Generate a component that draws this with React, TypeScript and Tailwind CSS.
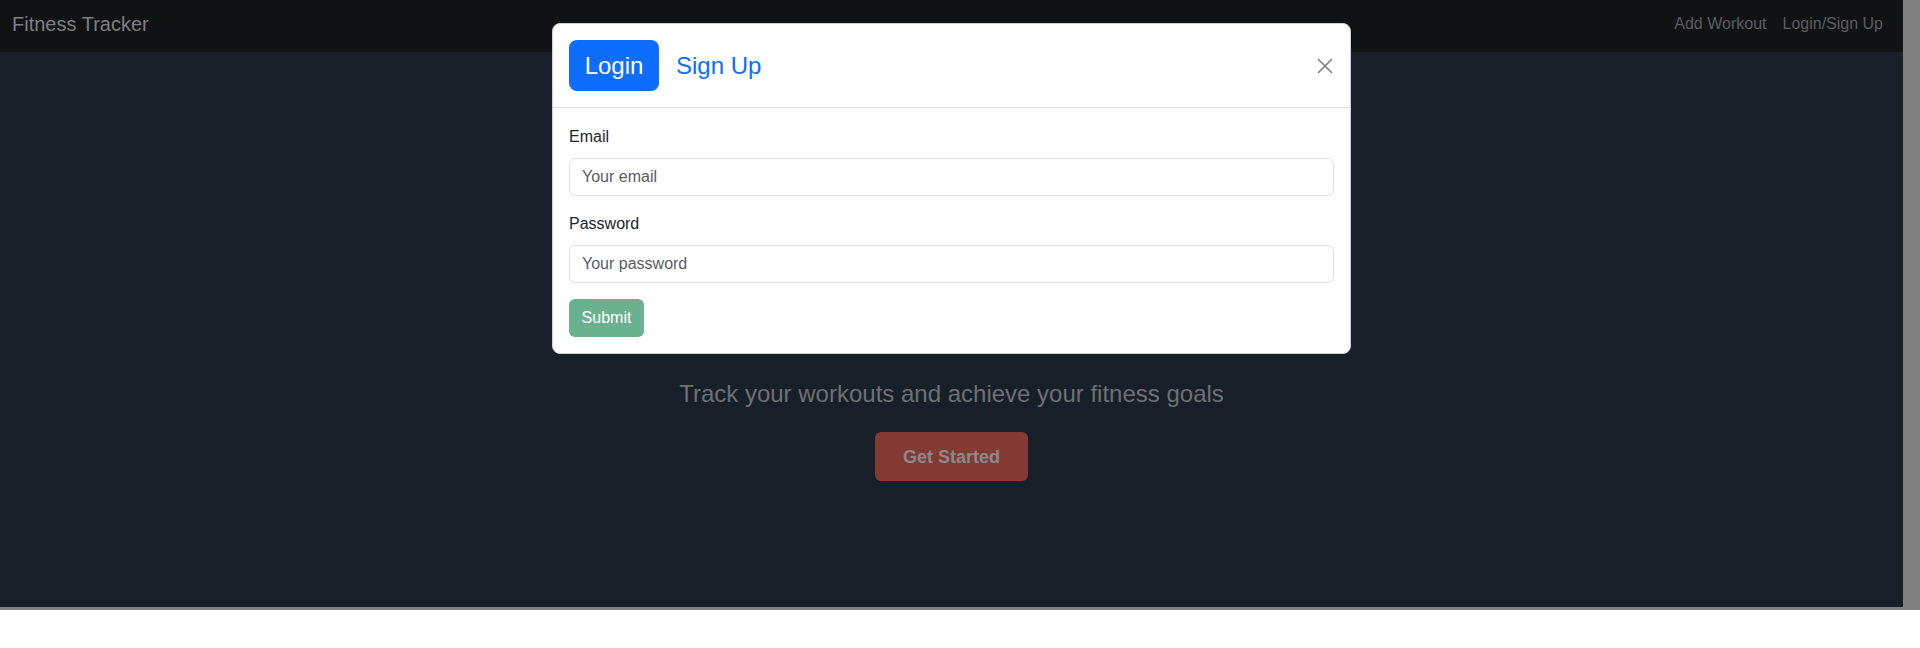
const font = "font-['Liberation_Sans',Arial,sans-serif]";

const Navbar = () => (
  <nav className="flex h-[52px] items-start justify-between bg-[#111214] pl-3 pr-3">
    <a className="mt-[9px] text-[20px] leading-[30px] text-[#7d7f82]">Fitness Tracker</a>
    <div className="mt-3 flex">
      <a className="px-2 text-base leading-6 text-[#5b5d60]">Add Workout</a>
      <a className="px-2 text-base leading-6 text-[#5b5d60]">Login/Sign Up</a>
    </div>
  </nav>
);

const Hero = () => (
  <section className="flex flex-col items-center pt-[324px]">
    <p className="mb-[20px] text-2xl leading-9 text-[#6d7075]">
      Track your workouts and achieve your fitness goals
    </p>
    <button className="h-[49px] rounded-md bg-[#843a32] px-7 text-lg font-bold text-[#8a8a8a]">
      Get Started
    </button>
  </section>
);

const CloseIcon = () => (
  <svg width="16" height="16" viewBox="0 0 16 16" className="mr-px">
    <path d="M1 1L15 15M15 1L1 15" stroke="#7f7f7f" strokeWidth="1.6" fill="none" />
  </svg>
);

const AuthModal = () => (
  <div className="absolute left-[552px] top-[23px] w-[799px] rounded-lg border border-[#cfd1d3] bg-white">
    <div className="flex items-center justify-between border-b border-[#dee2e6] p-4">
      <div className="flex">
        <button className="h-[51px] w-[90px] rounded-lg bg-[#0d6efd] text-2xl text-white">
          Login
        </button>
        <button className="ml-px h-[51px] px-4 text-2xl text-[#0d6efd]">Sign Up</button>
      </div>
      <CloseIcon />
    </div>
    <form className="px-4 pb-4 pt-[17px]">
      <label className="mb-[9px] block text-base leading-6 text-[#212529]">Email</label>
      <input
        className="mb-4 block h-[38px] w-full rounded-md border border-[#dee2e6] px-3 text-base text-[#212529] placeholder:text-[#595c5f]"
        placeholder="Your email"
      />
      <label className="mb-[9px] block text-base leading-6 text-[#212529]">Password</label>
      <input
        type="password"
        className="mb-4 block h-[38px] w-full rounded-md border border-[#dee2e6] px-3 text-base text-[#212529] placeholder:text-[#595c5f]"
        placeholder="Your password"
      />
      <button
        type="button"
        className="h-[38px] w-[75px] rounded-md bg-[#6ab190] text-base text-white"
      >
        Submit
      </button>
    </form>
  </div>
);

export default function App() {
  return (
    <div className={`${font} relative bg-white`}>
      <div className="h-[610px] bg-[#808080]">
        <div className="h-[607px] w-[1903px] bg-[#181f29]">
          <Navbar />
          <Hero />
        </div>
      </div>
      <AuthModal />
    </div>
  );
}
